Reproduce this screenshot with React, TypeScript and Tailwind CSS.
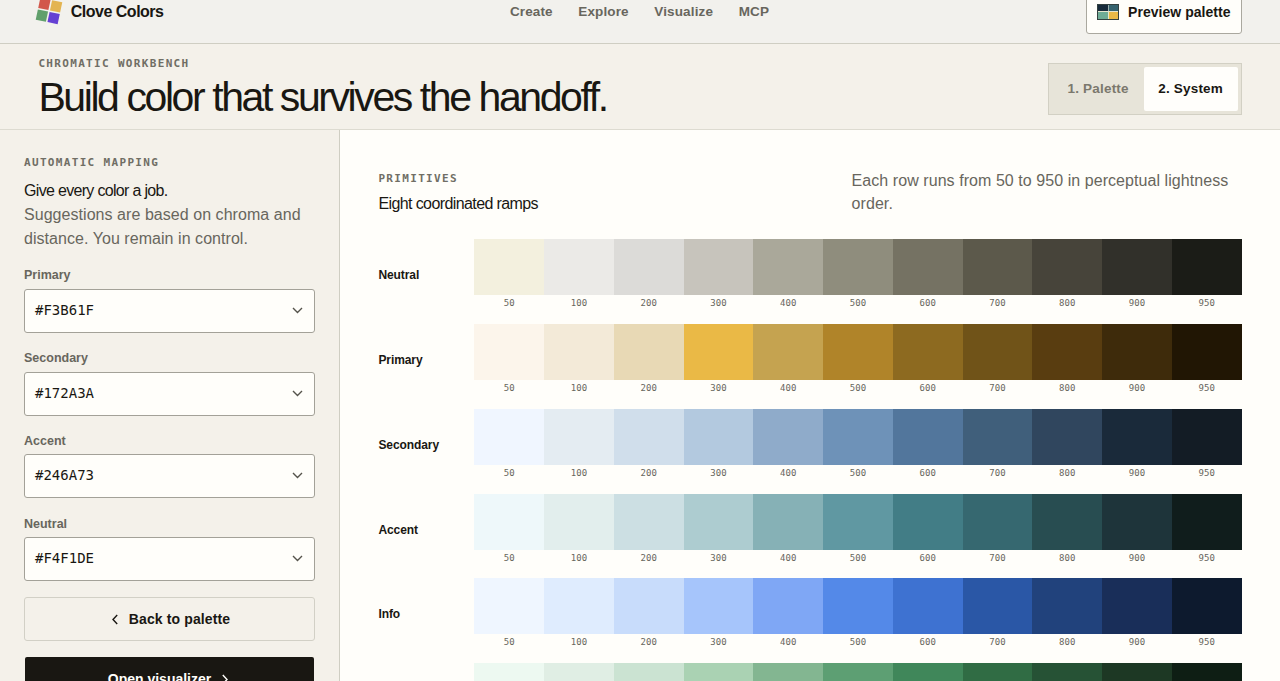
import React from "react";

const steps = ["50", "100", "200", "300", "400", "500", "600", "700", "800", "900", "950"];

const ramps = [
  { name: "Neutral", colors: ["#f3f0de", "#ebeae7", "#dcdbd8", "#c7c4bc", "#aaa89a", "#8f8d7d", "#757263", "#5c594b", "#47443a", "#31302a", "#1b1c17"] },
  { name: "Primary", colors: ["#fcf5eb", "#f3ead8", "#e8d9b5", "#eab946", "#c5a350", "#b08429", "#8d6a20", "#705318", "#593d10", "#3e2b0b", "#211604"] },
  { name: "Secondary", colors: ["#f0f6ff", "#e4ecf2", "#d0deeb", "#b3c9df", "#8fabca", "#6e92b8", "#52769c", "#405f7b", "#30465e", "#1a2a3a", "#131c25"] },
  { name: "Accent", colors: ["#eef8fa", "#e2eeed", "#ccdfe3", "#adccd0", "#86b1b6", "#6098a2", "#427d86", "#366870", "#284d51", "#1e343a", "#101d1c"] },
  { name: "Info", colors: ["#eff6ff", "#dfecfe", "#c8dcfb", "#a6c5fb", "#7fa7f5", "#5489e8", "#3e72d1", "#2a57a6", "#21427c", "#192e59", "#0d1a2e"] },
  { name: "Success", colors: ["#edf9f1", "#e0eee4", "#cbe3d2", "#aad2b3", "#83b691", "#5d9f73", "#40875a", "#306c44", "#265235", "#1d3824", "#0e1e14"] },
];

const roles = [
  ["Primary", "#F3B61F"],
  ["Secondary", "#172A3A"],
  ["Accent", "#246A73"],
  ["Neutral", "#F4F1DE"],
];

function Eyebrow({ children }: { children: React.ReactNode }) {
  return (
    <p className="font-['DejaVu_Sans_Mono',monospace] text-[11px] leading-[16px] font-bold tracking-[1.33px] text-[#706e65] whitespace-nowrap">
      {children}
    </p>
  );
}

function Logo() {
  return (
    <svg width="30" height="30" viewBox="0 0 30 30" className="shrink-0">
      <g transform="rotate(12 15 15)">
        <rect x="3.8" y="3.8" width="10.4" height="10.4" fill="#d2574b" />
        <rect x="15.8" y="3.8" width="10.4" height="10.4" fill="#e3b451" />
        <rect x="3.8" y="15.8" width="10.4" height="10.4" fill="#61a06c" />
        <rect x="15.8" y="15.8" width="10.4" height="10.4" fill="#6540d3" />
      </g>
    </svg>
  );
}

function Header() {
  return (
    <header className="-mt-5 flex h-16 shrink-0 items-center justify-between border-b border-[#cfcec3] bg-[#f2f1ed] pr-[38.4px] pl-[34.4px]">
      <div className="flex w-[475.5px] items-center gap-[6.4px]">
        <div className="-mt-px h-[30px]">
          <Logo />
        </div>
        <span className="pt-px text-[16px] font-bold tracking-[-0.5px]">Clove Colors</span>
      </div>
      <nav className="flex flex-1 gap-[25.6px] pt-px text-[13.5px] font-bold tracking-[0.13px] text-[#68665d]">
        <a>Create</a>
        <a>Explore</a>
        <a>Visualize</a>
        <a>MCP</a>
      </nav>
      <button className="flex h-11 w-[155.6px] items-center rounded-[3px] border border-[#aaa89f] bg-[#fffefa] pl-[10px] text-[14px] font-bold">
        <span className="mr-[9px] grid h-4 w-[22px] grid-cols-2 border border-[#33403f] bg-[#e6e5cf]">
          <i className="bg-[#172a3a]" />
          <i className="border-l border-[#9bb0ae] bg-[#35626d]" />
          <i className="border-t border-[#e6e5cf] bg-[#6fac96]" />
          <i className="border-t border-l border-[#e6e5cf] bg-[#eab946]" />
        </span>
        <span className="pt-px tracking-[0.04px] whitespace-nowrap">Preview palette</span>
      </button>
    </header>
  );
}

function Hero() {
  return (
    <section className="flex h-[86px] shrink-0 justify-between border-b border-[#dddbd1] px-[38.4px]">
      <div className="pt-[12px]">
        <Eyebrow>CHROMATIC WORKBENCH</Eyebrow>
        <h1 className="mt-[4px] text-[41px] leading-[43px] tracking-[-2.42px] whitespace-nowrap">Build color that survives the handoff.</h1>
      </div>
      <div className="mt-[19px] flex h-[52px] w-[194px] border border-[#d2d0c4] bg-[#e7e4d9] p-[3px] text-[13.5px] font-bold tracking-[0.2px]">
        <button className="w-[92px] pt-px pl-px text-[#7b786d]">1. Palette</button>
        <button className="flex-1 rounded-[2px] bg-[#fffefb] pt-px">2. System</button>
      </div>
    </section>
  );
}

function Sidebar() {
  return (
    <aside className="flex w-[340px] shrink-0 flex-col border-r border-[#cfcec3] px-6 pt-[25px]">
      <Eyebrow>AUTOMATIC MAPPING</Eyebrow>
      <h2 className="mt-[8px] text-[16px] leading-[24px] tracking-[-0.68px]">Give every color a job.</h2>
      <p className="text-[16px] leading-[24px] tracking-[0.05px] whitespace-nowrap text-[#68665d]">
        Suggestions are based on chroma and
        <br />
        distance. You remain in control.
      </p>
      <div className="mt-[14.8px] flex flex-col gap-[15.8px]">
        {roles.map(([name, value]) => (
          <label key={name} className="flex h-[67px] w-[291px] flex-col">
            <span className="h-[23px] pt-[0.6px] text-[12.5px] leading-[18px] font-bold text-[#68665d]">{name}</span>
            <span className="flex h-11 items-center justify-between rounded-[3px] border border-[#a3a198] bg-[#fffefa] pr-[11px] pb-px pl-[10px] font-['DejaVu_Sans_Mono',monospace] text-[14px]">
              {value}
              <svg width="11" height="7" viewBox="0 0 11 7" fill="none" stroke="#55534b" strokeWidth="1.4">
                <path d="M1 1l4.5 4.5L10 1" />
              </svg>
            </span>
          </label>
        ))}
      </div>
      <button className="mt-[16px] flex h-11 w-[291px] shrink-0 items-center justify-center gap-[11px] rounded-[3px] border border-[#d2d0c6] pl-[3px] text-[14px] font-bold tracking-[0.12px]">
        <svg width="6" height="11" viewBox="0 0 6 11" fill="none" stroke="currentColor" strokeWidth="1.4">
          <path d="M5.2 1L1 5.5l4.2 4.5" />
        </svg>
        Back to palette
      </button>
      <button className="mt-[16.3px] ml-px flex h-11 w-[289px] shrink-0 items-center justify-center gap-[11px] rounded-[2px] bg-[#191712] pr-[3px] text-[14px] font-bold text-[#fffefa]">
        Open visualizer
        <svg width="6" height="11" viewBox="0 0 6 11" fill="none" stroke="currentColor" strokeWidth="1.4">
          <path d="M.8 1L5 5.5.8 10" />
        </svg>
      </button>
    </aside>
  );
}

function Ramps() {
  return (
    <main className="flex min-w-0 flex-1 flex-col bg-[#fffefa] px-[38.4px] pt-[39px]">
      <div className="flex h-[70.3px] shrink-0 justify-between">
        <div className="pt-[2px]">
          <Eyebrow>PRIMITIVES</Eyebrow>
          <h2 className="mt-[5px] text-[16px] leading-[24px] tracking-[-0.6px]">Eight coordinated ramps</h2>
        </div>
        <p className="w-[390px] text-[16px] leading-[23px] tracking-[0.06px] text-[#68665d]">
          Each row runs from 50 to 950 in perceptual lightness
          <br />
          order.
        </p>
      </div>
      {ramps.map((ramp) => (
        <div key={ramp.name} className="flex h-[84.8px] shrink-0">
          <strong className="w-24 shrink-0 pt-[27px] text-[12px] leading-[18px] tracking-[-0.08px]">{ramp.name}</strong>
          <div className="grid flex-1 grid-cols-11">
            {steps.map((step, i) => (
              <div key={step}>
                <div className="h-14" style={{ backgroundColor: ramp.colors[i] }} />
                <p className="text-center font-['DejaVu_Sans_Mono',monospace] text-[9px] leading-[16px] text-[#68665d]">{step}</p>
              </div>
            ))}
          </div>
        </div>
      ))}
    </main>
  );
}

export default function App() {
  return (
    <div className="flex h-[681px] w-[1280px] flex-col overflow-hidden bg-[#f4f1ea] font-['Liberation_Sans',Arial,sans-serif] text-[#191712]">
      <Header />
      <Hero />
      <div className="flex min-h-0 flex-1">
        <Sidebar />
        <Ramps />
      </div>
    </div>
  );
}
